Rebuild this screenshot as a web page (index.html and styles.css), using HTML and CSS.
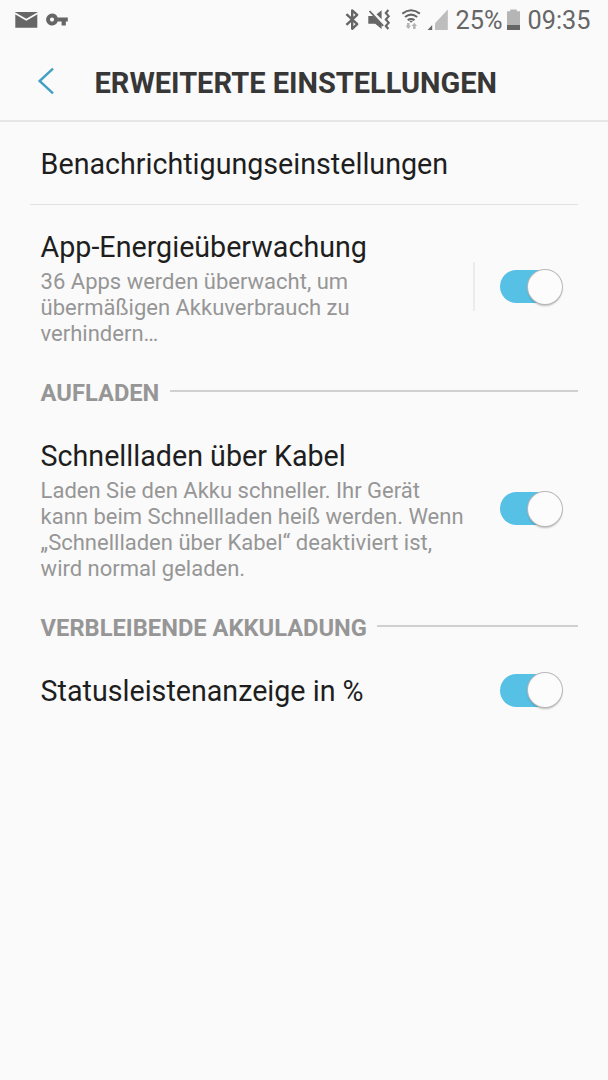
FILE: index.html
```html
<!DOCTYPE html>
<html lang="de">
<head>
    <meta charset="UTF-8">
    <meta name="viewport" content="width=device-width, initial-scale=1.0">
    <title>Erweiterte Einstellungen</title>
    <link rel="stylesheet" href="styles.css">
</head>
<body>

    <div class="statusbar">
        <svg class="notifications" width="80" height="40" viewBox="0 0 80 40">
            <path d="M15.3 12h22v15.7h-22z" fill="#666"/>
            <path d="M15 13.2l11.3 6.6 11.3-6.6" fill="none" stroke="#fafafa" stroke-width="1.8"/>
            <path fill-rule="evenodd" d="M52 13.6a6 6 0 1 0 5.7 8h3.9v4h4.2v-4h2v-4H57.7a6 6 0 0 0-5.7-4zm0 3.9a2.1 2.1 0 1 1 0 4.2 2.1 2.1 0 0 1 0-4.2z" fill="#666"/>
        </svg>
        <svg class="system" width="115" height="40" viewBox="335 0 115 40">
            <path d="M346.4 14.2l10.8 10-5 4.6V10.4l5 4.4-10.8 10" fill="none" stroke="#666" stroke-width="2.4" stroke-linejoin="round"/>
            <path d="M368.3 16h5l8.3 8.4V29l-6.4-5.3h-6.9zM376.6 14.2l5-4v9z" fill="#666"/>
            <path d="M369.5 11l13.7 14.8" stroke="#666" stroke-width="1.8"/>
            <path d="M388.4 10l-2.6 3 2.9 3.3-2.9 3.2 2.9 3.3-2.9 3.2 2.6 3" fill="none" stroke="#666" stroke-width="2.1"/>
            <path d="M402.3 13.6q8.8-6.7 17.6 0M405 17q6.1-4.8 12.2 0M407.7 20.1q3.4-2.4 6.8 0" fill="none" stroke="#666" stroke-width="2"/>
            <path d="M409 20.8h4.2l-2.1 2z" fill="#666"/>
            <path d="M407 23h2.6v2.8h1.5l-2.8 3.3-2.8-3.3h1.5zM413 29h2.6v-2.9h1.5l-2.8-3.3-2.8 3.3h1.5z" fill="#b5b5b5"/>
            <path d="M435 23.2l12.8-13.6V30H435z" fill="#bdbdbd"/>
            <path d="M427.6 30l4.6-4.9V30z" fill="#666"/>
        </svg>
        <span class="percent">25%</span>
        <svg class="battery" width="13" height="40" viewBox="0 0 13 40">
            <path d="M0 11.2h3.2V9.4h6.6v1.8H13V30H0z" fill="#b5b5b5"/>
            <path d="M0 25h13v5H0z" fill="#666"/>
        </svg>
        <span class="time">09:35</span>
    </div>

    <div class="header">
        <svg class="back" width="18" height="28" viewBox="0 0 18 28">
            <path d="M16 1.6L2.6 14 16 26.4" fill="none" stroke="#449fc4" stroke-width="2.4"/>
        </svg>
        <h1>ERWEITERTE EINSTELLUNGEN</h1>
    </div>

    <div class="item notify">
        <h2>Benachrichtigungseinstellungen</h2>
    </div>

    <div class="item monitor">
        <div class="text">
            <h2>App-Energieüberwachung</h2>
            <p>36 Apps werden überwacht, um<br>übermäßigen Akkuverbrauch zu<br>verhindern…</p>
        </div>
        <div class="separator"></div>
        <div class="switch"><div class="thumb"></div></div>
    </div>

    <div class="section">
        <h3>AUFLADEN</h3>
        <div class="line"></div>
    </div>

    <div class="item cable">
        <div class="text">
            <h2>Schnellladen über Kabel</h2>
            <p>Laden Sie den Akku schneller. Ihr Gerät<br>kann beim Schnellladen heiß werden. Wenn<br>„Schnellladen über Kabel“ deaktiviert ist,<br>wird normal geladen.</p>
        </div>
        <div class="switch"><div class="thumb"></div></div>
    </div>

    <div class="section">
        <h3>VERBLEIBENDE AKKULADUNG</h3>
        <div class="line"></div>
    </div>

    <div class="item status">
        <h2>Statusleistenanzeige in %</h2>
        <div class="switch"><div class="thumb"></div></div>
    </div>

</body>
</html>
```
FILE: styles.css
```css
* {
    box-sizing: border-box;
}

body {
    font-family: Roboto, "Liberation Sans", sans-serif;
    background-color: #fafafa;
    color: #1e1e1e;
    min-height: 100vh;
    margin: 0;
}

h1, h2, h3, p {
    margin: 0;
    white-space: nowrap;
}

/* Barra de estado */
.statusbar {
    display: flex;
    height: 40px;
    line-height: 42px;
    font-size: 25.3px;
    color: #666;
}

.statusbar svg {
    flex: none;
}

.statusbar .system {
    margin-left: 255px;
}

.statusbar .percent {
    width: 57px;
    padding-left: 5.5px;
}

.statusbar .time {
    padding-left: 7.5px;
}

.header {
    display: flex;
    align-items: center;
    height: 82px;
    padding-left: 37px;
    border-bottom: 2px solid #e6e6e6;
}

.header .back {
    margin-top: 2px;
}

.header h1 {
    margin-left: 39.5px;
    padding-top: 5px;
    font-size: 29px;
    font-weight: 700;
    line-height: 34px;
    color: #373737;
}

/* Filas de ajustes */
.item {
    display: flex;
    align-items: center;
    justify-content: space-between;
    margin: 0 30px;
    padding: 0 15px 0 10.6px;
}

.item h2 {
    font-size: 28.65px;
    font-weight: 400;
    line-height: 34px;
}

.item p {
    margin-top: 5px;
    font-size: 22px;
    line-height: 26px;
    color: #969696;
}

.notify {
    height: 83px;
    padding-top: 2px;
    border-bottom: 1px solid #e2e2e2;
}

.monitor {
    height: 165px;
}

.monitor .text {
    padding-top: 1px;
}

.monitor .separator {
    width: 2px;
    height: 49px;
    margin-top: -2px;
    margin-left: auto;
    margin-right: 25px;
    background: #ebebeb;
}

.monitor .switch {
    margin-top: -2px;
}

.cable {
    height: 191px;
    align-items: flex-start;
    padding-top: 25px;
}

.cable .switch {
    margin-top: 53px;
}

.status {
    height: 82px;
}

.status h2 {
    padding-top: 2px;
}

.switch {
    flex: none;
    display: flex;
    align-items: center;
    justify-content: flex-end;
    width: 63px;
    height: 33px;
    padding-right: 1px;
    border-radius: 17px;
    background: linear-gradient(to right, #56c0e5 45px, transparent 45px);
}

.switch .thumb {
    width: 34px;
    height: 34px;
    flex: none;
    border-radius: 50%;
    background: #fcfcfc;
    box-shadow: 0 0 0 1px #b8b8b8, 0 2px 2px rgba(0, 0, 0, 0.25);
}

/* Títulos de sección */
.section {
    display: flex;
    align-items: center;
    height: 44px;
    margin: 0 30px;
    padding-left: 10.6px;
}

.section h3 {
    padding-top: 1px;
    font-size: 23.7px;
    font-weight: 700;
    line-height: 28px;
    color: #969696;
}

.section .line {
    flex: 1;
    height: 2px;
    margin-left: 10.5px;
    margin-bottom: 2px;
    background: #d0d0d0;
}
```
